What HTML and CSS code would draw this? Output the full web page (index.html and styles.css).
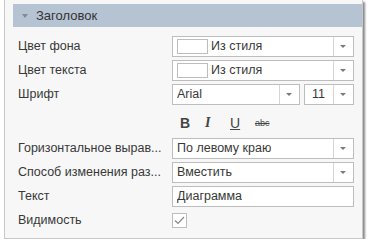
FILE: index.html
```html
<!DOCTYPE html>
<html lang="ru">
<head>
    <meta charset="UTF-8">
    <title>Свойства заголовка</title>
    <link rel="stylesheet" href="styles.css">
</head>
<body>

<div class="panel">
    <div class="panel-header">
        <span class="caret"></span>
        <span class="panel-title">Заголовок</span>
    </div>

    <div class="props">
        <div class="row">
            <span class="label">Цвет фона</span>
            <div class="field combo">
                <span class="swatch"></span>
                <span class="value">Из стиля</span>
                <span class="trigger"></span>
            </div>
        </div>
        <div class="row">
            <span class="label">Цвет текста</span>
            <div class="field combo">
                <span class="swatch"></span>
                <span class="value">Из стиля</span>
                <span class="trigger"></span>
            </div>
        </div>
        <div class="row">
            <span class="label">Шрифт</span>
            <div class="font-fields">
                <div class="field combo font-name">
                    <span class="value">Arial</span>
                    <span class="trigger"></span>
                </div>
                <div class="field combo font-size">
                    <span class="value">11</span>
                    <span class="trigger"></span>
                </div>
            </div>
        </div>
        <div class="row format-row">
            <span class="label"></span>
            <div class="format-buttons">
                <span class="fmt fmt-b">B</span>
                <span class="fmt fmt-i">I</span>
                <span class="fmt fmt-u">U</span>
                <span class="fmt fmt-s">abc</span>
            </div>
        </div>
        <div class="row">
            <span class="label">Горизонтальное вырав...</span>
            <div class="field combo">
                <span class="value">По левому краю</span>
                <span class="trigger"></span>
            </div>
        </div>
        <div class="row">
            <span class="label">Способ изменения раз...</span>
            <div class="field combo">
                <span class="value">Вместить</span>
                <span class="trigger"></span>
            </div>
        </div>
        <div class="row">
            <span class="label">Текст</span>
            <div class="field">
                <span class="value">Диаграмма</span>
            </div>
        </div>
        <div class="row">
            <span class="label">Видимость</span>
            <div class="checkbox">
                <svg width="11" height="9" viewBox="0 0 11 9">
                    <path d="M1 4.5 L4 7.5 L10 1" fill="none" stroke="#8a8a8a" stroke-width="1.2"/>
                </svg>
            </div>
        </div>
    </div>
</div>

</body>
</html>
```

FILE: styles.css
```css
body {
    margin: 0;
    background: #ffffff;
    font-family: "Liberation Sans", Arial, sans-serif;
    font-size: 12.5px;
    color: #383838;
}
.panel {
    margin-left: 4px;
    width: 359px;
    height: 239px;
    padding-top: 4px;
    box-sizing: border-box;
    background: #f7f7f7;
    border: 1px solid #c8c8c8;
    border-top: none;
    box-shadow: 2px 2px 2px #8a8a8a;
}
.panel-header {
    margin-left: 8px;
    height: 23px;
    background: #b6c3d3;
    display: flex;
    align-items: center;
    padding-left: 9px;
}
.caret {
    width: 0;
    height: 0;
    border-left: 3px solid transparent;
    border-right: 3px solid transparent;
    border-top: 4px solid #808b99;
    margin-right: 8px;
}
.panel-title {
    font-size: 13px;
    color: #333333;
}
.props {
    padding: 7px 0 0 13px;
}
.row {
    display: grid;
    grid-template-columns: 154px 182px;
    align-items: center;
    height: 24px;
}
.format-row {
    height: 27px;
    padding-top: 3px;
}
.label {
    white-space: nowrap;
}
.field {
    position: relative;
    height: 21px;
    box-sizing: border-box;
    background: #ffffff;
    border: 1px solid #bdbdbd;
    display: flex;
    align-items: center;
    padding-left: 4px;
}
.combo {
    padding-right: 20px;
}
.value {
    white-space: nowrap;
    overflow: hidden;
}
.swatch {
    width: 31px;
    height: 15px;
    box-sizing: border-box;
    border: 1px solid #bdbdbd;
    margin-right: 3px;
    flex-shrink: 0;
}
.trigger {
    position: absolute;
    right: 0;
    top: 0;
    bottom: 0;
    width: 19px;
    border-left: 1px solid #d6d6d6;
}
.trigger::after {
    content: "";
    position: absolute;
    left: 6px;
    top: 8px;
    border-left: 3px solid transparent;
    border-right: 3px solid transparent;
    border-top: 3px solid #7a7a7a;
}
.font-fields {
    display: flex;
    gap: 4px;
}
.font-name {
    width: 128px;
}
.font-size {
    width: 50px;
    padding-left: 7px;
}
.format-buttons {
    display: flex;
    align-items: center;
    padding-left: 8px;
}
.fmt {
    width: 25px;
    color: #444444;
    font-size: 14px;
}
.fmt-b {
    font-weight: bold;
}
.fmt-i {
    font-family: "Liberation Serif", serif;
    font-style: italic;
    font-weight: bold;
}
.fmt-u {
    text-decoration: underline;
}
.fmt-s {
    font-size: 9px;
    text-decoration: line-through;
}
.checkbox {
    width: 15px;
    height: 15px;
    box-sizing: border-box;
    border: 1px solid #bdbdbd;
    background: #ffffff;
    display: flex;
    align-items: center;
    justify-content: center;
}
```
